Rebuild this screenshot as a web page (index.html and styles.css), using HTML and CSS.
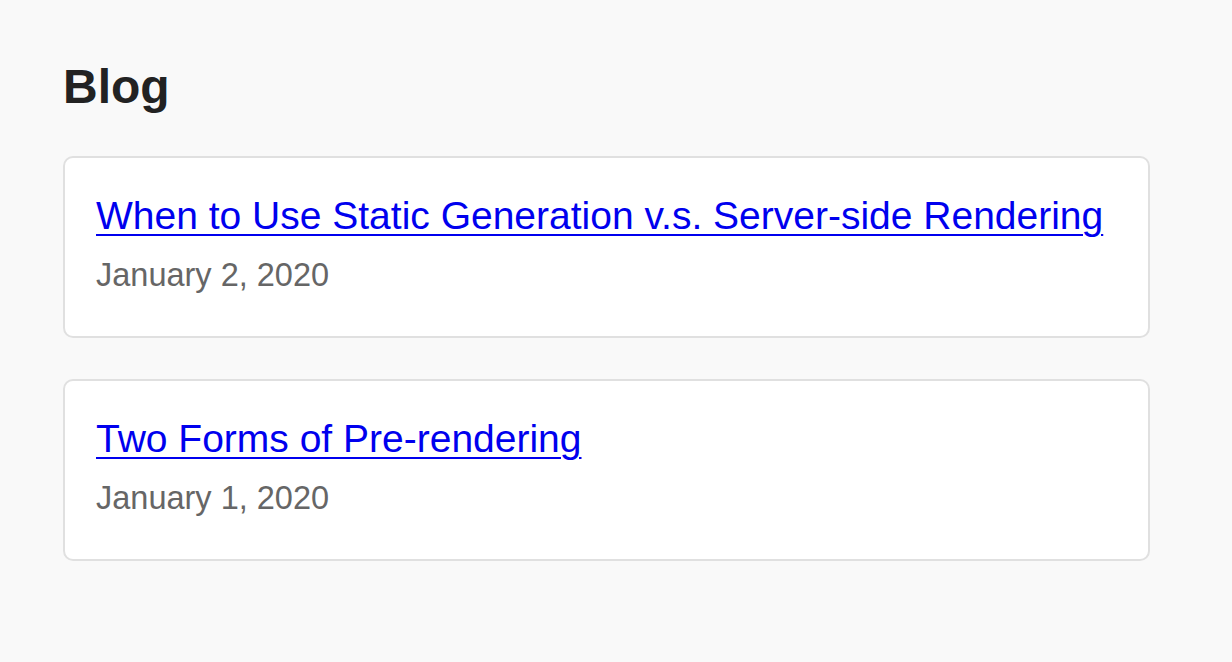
FILE: index.html
```html
<!DOCTYPE html>
<html>
<head>
<meta charset="utf-8">
<link rel="stylesheet" href="styles.css">
</head>
<body>
<main class="page">
  <h1 class="title">Blog</h1>
  <ul class="posts">
    <li class="card">
      <a class="post-link" href="#">When to Use Static Generation v.s. Server-side Rendering</a>
      <div class="date">January 2, 2020</div>
    </li>
    <li class="card">
      <a class="post-link" href="#">Two Forms of Pre-rendering</a>
      <div class="date">January 1, 2020</div>
    </li>
  </ul>
</main>
</body>
</html>
```
FILE: styles.css
```css
html, body {
  margin: 0;
  padding: 0;
  background: #f9f9f9;
}
body {
  font-family: "Liberation Sans", Arial, Helvetica, sans-serif;
  color: #222;
}
.page {
  width: 1087px;
  padding: 59px 0 0 63px;
}
.title {
  margin: 0 0 42px 0;
  font-size: 48px;
  font-weight: 700;
  line-height: 55px;
  color: #222;
}
.posts {
  list-style: none;
  margin: 0;
  padding: 0;
  display: flex;
  flex-direction: column;
  gap: 41px;
}
.card {
  background: #fff;
  border: 2px solid #e0e0e0;
  border-radius: 10px;
  padding: 30px 32px 41px 31px;
  display: flex;
  flex-direction: column;
  align-items: flex-start;
}
.post-link {
  font-size: 39px;
  line-height: 56px;
  white-space: nowrap;
  color: #0000ee;
  text-decoration: underline;
  text-decoration-thickness: 2px;
  text-underline-offset: 5px;
}
.date {
  margin-top: 11px;
  font-size: 32.5px;
  line-height: 40px;
  color: #666;
}
```
